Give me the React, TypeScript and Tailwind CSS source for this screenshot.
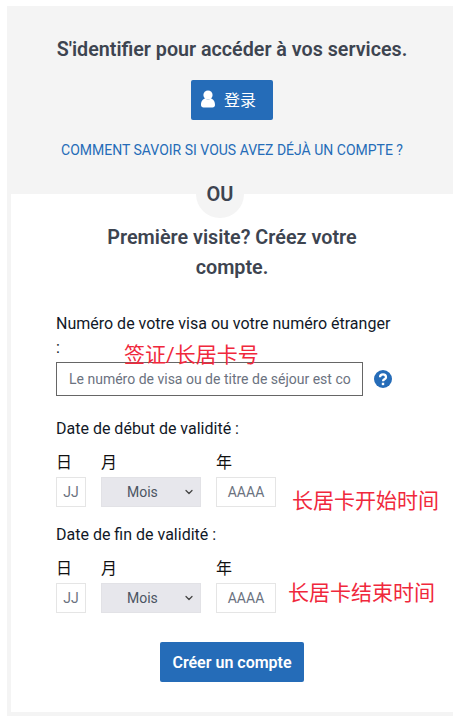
import { ChevronDown } from 'lucide-react';

const roboto = "font-['Roboto','Noto_Sans_CJK_SC',sans-serif]";

function DateFields({ label }: { label: string }) {
  return (
    <div>
      <p className="text-[16px] leading-[20px] text-[#111827]">{label}</p>
      <div className="mt-[14px] flex gap-[15px]">
        <div className="w-[30px]">
          <p className="text-[16px] leading-[20px] text-[#111]">日</p>
          <div className="mt-[4px] flex h-[30px] items-center justify-center border border-[#e5e5e5] text-[14px] text-[#6b7280]">JJ</div>
        </div>
        <div className="w-[100px]">
          <p className="text-[16px] leading-[20px] text-[#111]">月</p>
          <div className="relative mt-[4px] flex h-[30px] items-center border border-[#e2e2e6] bg-[#e7e7ec] pl-[25px] text-[14px] text-[#4b5563]">
            Mois
            <ChevronDown className="absolute right-[5px] top-[8px] h-[12px] w-[12px] text-[#444]" strokeWidth={2.5} />
          </div>
        </div>
        <div className="w-[60px]">
          <p className="text-[16px] leading-[20px] text-[#111]">年</p>
          <div className="mt-[4px] flex h-[30px] items-center justify-center border border-[#e5e5e5] text-[14px] text-[#6b7280]">AAAA</div>
        </div>
      </div>
    </div>
  );
}

export default function App() {
  return (
    <div className={`${roboto} relative h-[718px] w-[453px] overflow-hidden bg-white pl-[7px] pt-[6px]`}>
      <div className="h-[710px] w-[450px] bg-[#f4f4f4]">
        {/* Bloc identification */}
        <div className="flex h-[188px] flex-col items-center pt-[32px]">
          <h2 className="whitespace-nowrap text-[19.7px] font-semibold leading-[24px] text-[#3d4450]">S'identifier pour accéder à vos services.</h2>
          <button className="mt-[18px] flex h-[40px] w-[82px] items-center rounded-[2px] bg-[#256cb8] pl-[9px] text-[16px] text-white">
            <svg viewBox="0 0 16 18" className="h-[18px] w-[16px] -translate-y-[1px]" fill="white">
              <circle cx="8" cy="5" r="4.6" />
              <path d="M1 15c0-4 2-6 4-6.500 2 1.200 4 1.200 6 0 2 .5 4 2.500 4 6.500 0 1.500-1 2.500-2.500 2.500h-9C2 17.500 1 16.500 1 15z" />
            </svg>
            <span className="ml-[8px] pt-[2px]">登录</span>
          </button>
          <a className="mt-[21px] text-[14px] leading-[18px] text-[#256cb8]">COMMENT SAVOIR SI VOUS AVEZ DÉJÀ UN COMPTE ?</a>
        </div>

        {/* Bloc création */}
        <div className="relative ml-[4px] h-[518px] bg-white">
          <div className="absolute left-[185px] top-[-24px] h-[48px] w-[48px] rounded-full bg-[#f4f4f4]" />
          <p className="absolute left-[185px] top-[-10px] w-[48px] text-center text-[20px] font-semibold leading-[20px] text-[#3d4450]">OU</p>
          <h2 className="relative ml-[86px] w-[270px] pt-[29px] text-center text-[19.8px] font-semibold leading-[30px] text-[#3d4450]">
            Première visite? Créez votre compte.
          </h2>
          <div className="pl-[45px] pr-[50px] pt-[29px]">
            <label className="block w-[340px] text-[16px] leading-[24px] text-[#111827]">Numéro de votre visa ou votre numéro étranger :</label>
            <div className="mt-[2px] flex items-center">
              <div className="flex h-[34px] w-[307px] items-center overflow-hidden whitespace-nowrap border border-[#666] pl-[12px] text-[14px] text-[#6b7280]">
                Le numéro de visa ou de titre de séjour est co
              </div>
              <svg viewBox="0 0 24 24" className="ml-[11px] h-[18px] w-[18px]">
                <circle cx="12" cy="12" r="12" fill="#256cb8" />
                <path d="M8 9.500a4 3.600 0 0 1 8 0c0 3-4 2.800-4 5.500" fill="none" stroke="white" strokeWidth="3" />
                <rect x="10.400" y="17" width="3.200" height="3.200" fill="white" />
              </svg>
            </div>
            <div className="mt-[23px]"><DateFields label="Date de début de validité :" /></div>
            <div className="mt-[18px]"><DateFields label="Date de fin de validité :" /></div>
            <button className="ml-[104px] mt-[29px] h-[40px] w-[144px] rounded-[2px] bg-[#256cb8] pt-[2px] text-[16px] font-semibold text-white">Créer un compte</button>
          </div>
        </div>
      </div>
      <div className="absolute bottom-0 left-0 right-0 h-[2px] bg-white" />

      {/* Annotations rouges */}
      <span className="absolute left-[124px] top-[342px] text-[21px] leading-[26px] text-[#f0283c]">签证/长居卡号</span>
      <span className="absolute left-[292px] top-[488px] text-[21px] leading-[26px] text-[#f0283c]">长居卡开始时间</span>
      <span className="absolute left-[288px] top-[580px] text-[21px] leading-[26px] text-[#f0283c]">长居卡结束时间</span>
    </div>
  );
}
